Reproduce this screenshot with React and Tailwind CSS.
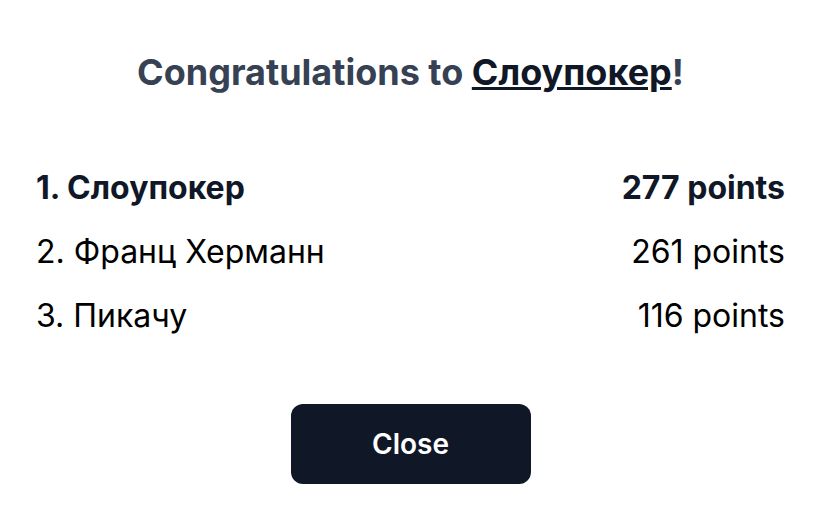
const players = [
  { name: "Слоупокер", points: 277 },
  { name: "Франц Херманн", points: 261 },
  { name: "Пикачу", points: 116 },
];

export default function App() {
  return (
    <div
      className="w-[819px] bg-white pl-9 pr-[34px] pt-[52px] pb-[46px]"
      style={{ fontFamily: "Inter, 'Noto Sans', sans-serif" }}
    >
      <h2 className="text-center text-4xl leading-10 font-bold text-gray-700">
        Congratulations to{" "}
        <span className="text-gray-900 underline decoration-[3px]">
          Слоупокер
        </span>
        !
      </h2>
      <ul className="mt-16 flex flex-col">
        {players.map((p, i) => (
          <li
            key={p.name}
            className={`flex justify-between items-center h-16 text-[32px] leading-10 ${
              i === 0 ? "font-bold text-gray-900" : "text-black"
            }`}
          >
            <span>
              {i + 1}. {p.name}
            </span>
            <span>{p.points} points</span>
          </li>
        ))}
      </ul>
      <div className="mt-14 flex justify-center">
        <button className="w-[240px] h-20 rounded-xl bg-gray-900 text-white text-[28px] font-semibold">
          Close
        </button>
      </div>
    </div>
  );
}
